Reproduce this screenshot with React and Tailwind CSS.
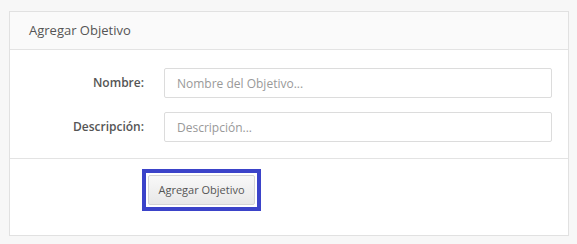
// Panel with a small form for adding an objective.
export default function App() {
  return (
    <div className="h-[244px] w-[577px] bg-[#f7f7f7] pl-[9px] pt-[11px] font-['Open_Sans',sans-serif]">
      <div className="w-[560px] border border-[#e1e1e1] bg-white">
        <div className="h-[38px] border-b border-[#e3e3e3] bg-[#fafafa] pl-[19px] text-[13px] leading-[37px] text-[#555]">
          Agregar Objetivo
        </div>

        <div className="flex flex-col gap-[14px] pt-[18px] pb-[16px] pr-[16px]">
          <div className="flex items-center">
            <label className="w-[135px] pr-[1px] text-right text-[12px] font-semibold text-[#555]">Nombre:</label>
            <input
              className="ml-[19px] h-[30px] flex-1 rounded-[2px] border border-[#dcdcdc] px-[12px] text-[12px] text-[#555] placeholder:text-[#999] outline-none"
              placeholder="Nombre del Objetivo..."
            />
          </div>
          <div className="flex items-center">
            <label className="w-[135px] pr-[1px] text-right text-[12px] font-semibold text-[#555]">Descripción:</label>
            <input
              className="ml-[19px] h-[30px] flex-1 rounded-[2px] border border-[#dcdcdc] px-[12px] text-[12px] text-[#555] placeholder:text-[#999] outline-none"
              placeholder="Descripción..."
            />
          </div>
        </div>

        <div className="border-t border-[#e3e3e3] pt-[10px] pb-[24px] pl-[132px]">
          <div className="inline-block border-4 border-[#3b43c9] bg-white p-[2px]">
            <button
              type="button"
              className="block h-[30px] w-[107px] rounded-[2px] border border-[#d4d4d4] bg-gradient-to-b from-[#f8f8f8] to-[#e8e8e8] text-[11px] text-[#555]"
            >
              Agregar Objetivo
            </button>
          </div>
        </div>
      </div>
    </div>
  );
}
